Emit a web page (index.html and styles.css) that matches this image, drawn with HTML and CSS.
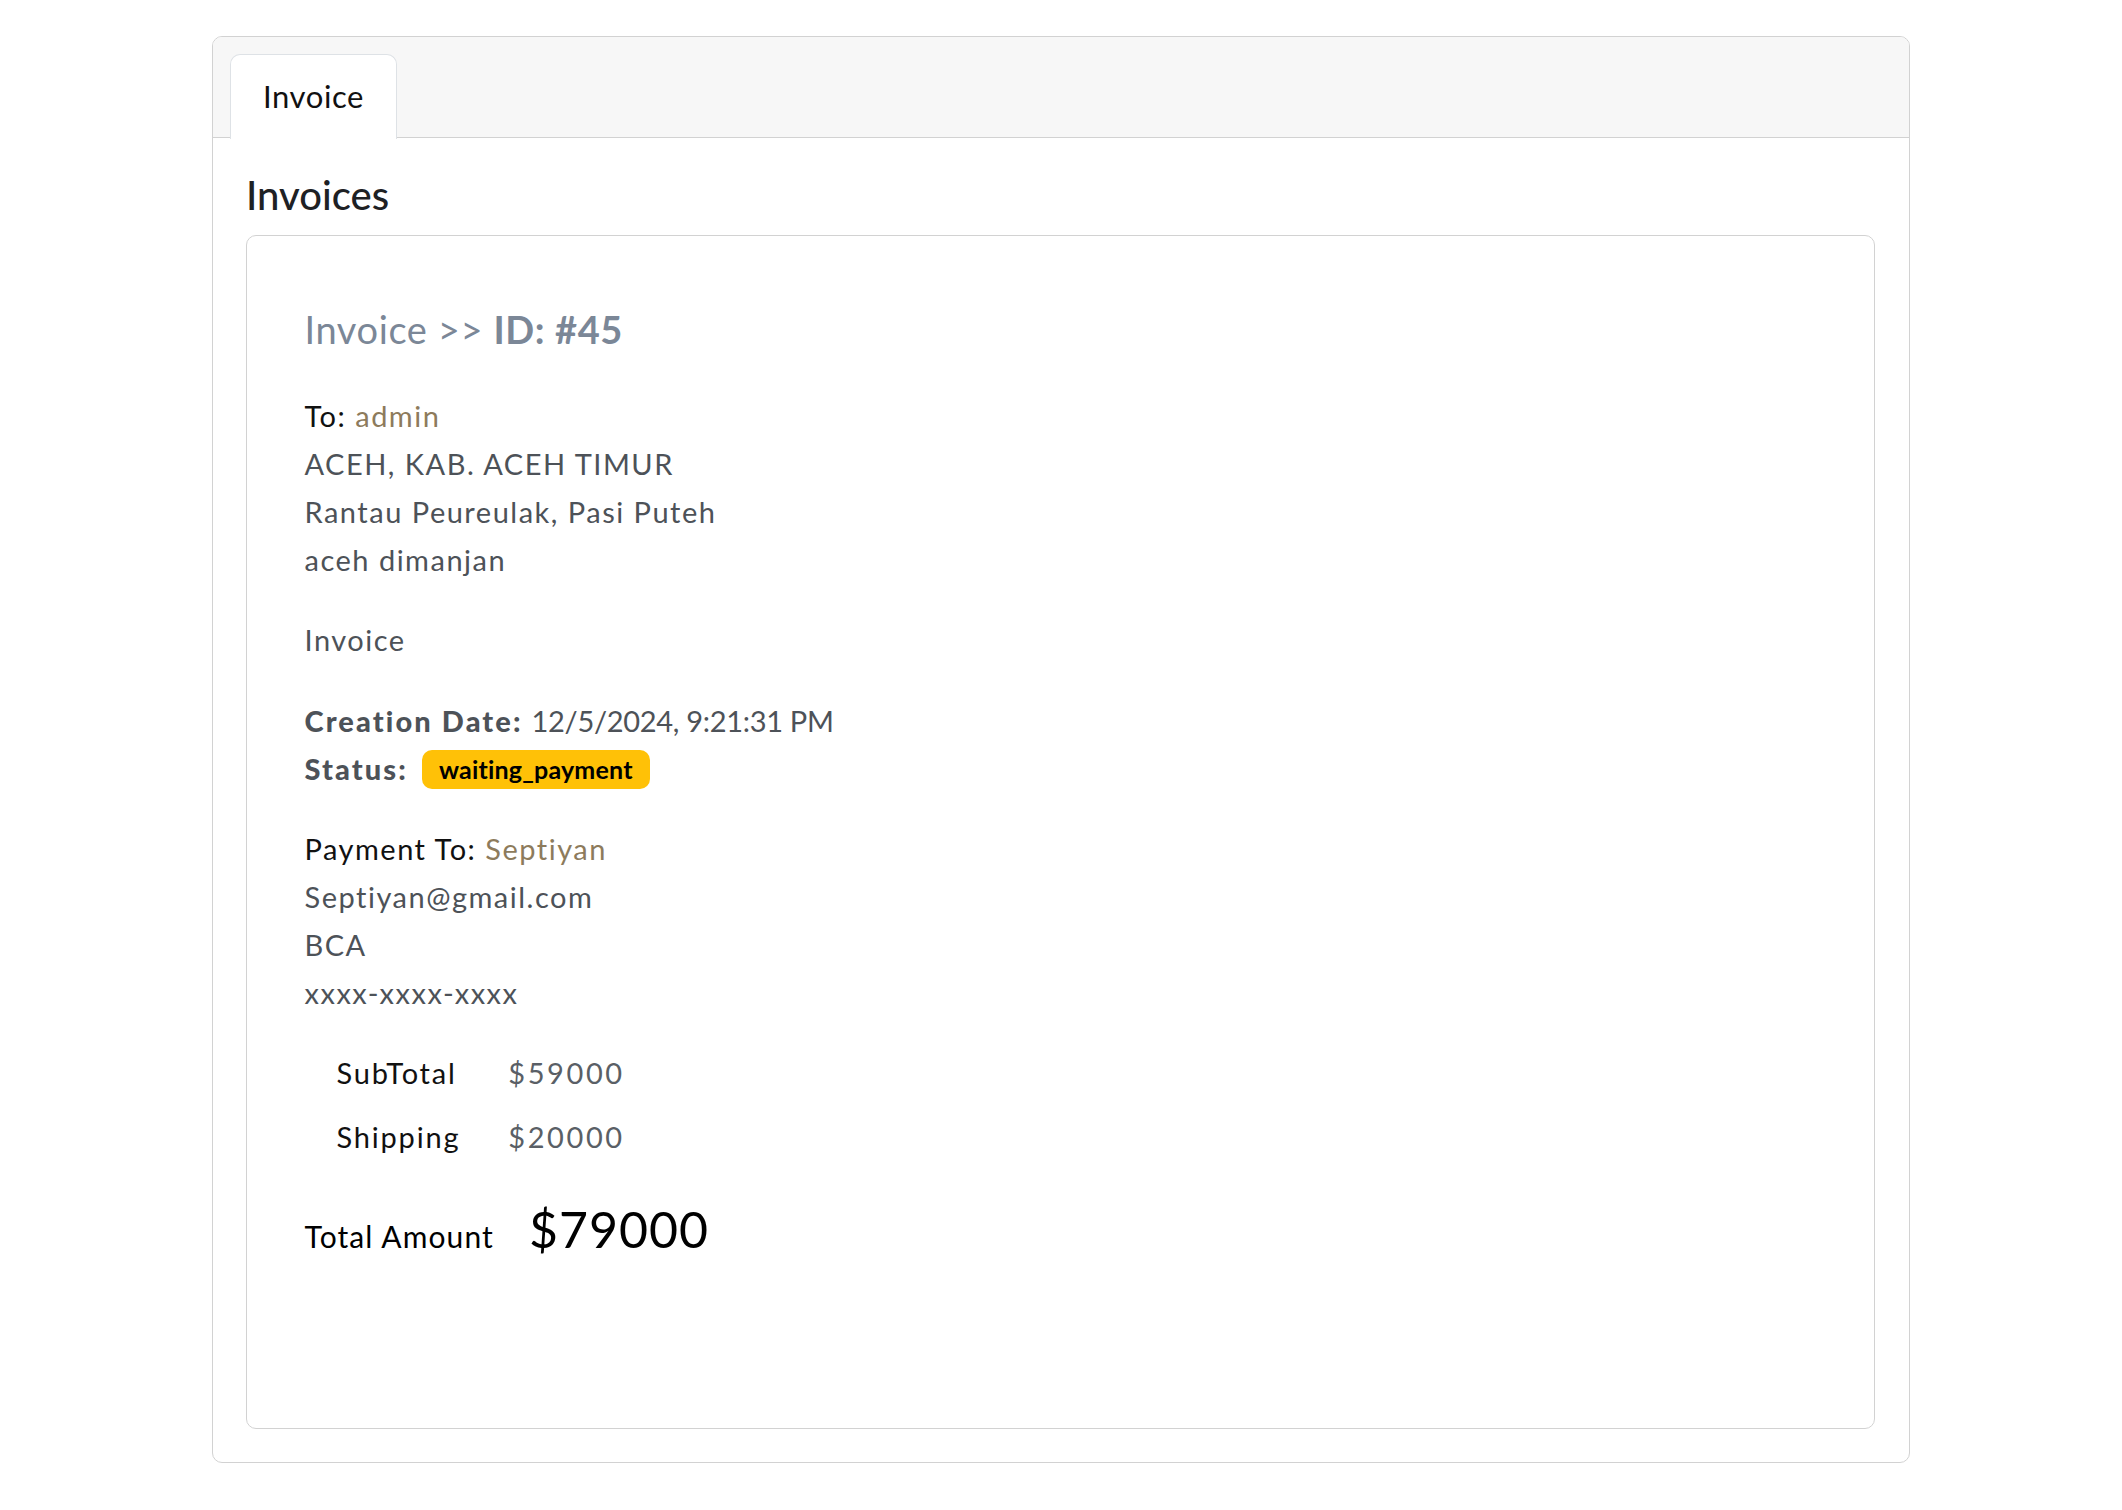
FILE: index.html
```html
<!DOCTYPE html>
<html lang="en">
<head>
<meta charset="utf-8">
<title>Invoices</title>
<link rel="stylesheet" href="styles.css">
</head>
<body>
<div class="card">
  <div class="card-header">
    <div class="tab">Invoice</div>
  </div>
  <div class="card-body">
    <h2 class="heading">Invoices</h2>
    <div class="invoice">
      <h3 class="inv-title">Invoice &gt;&gt; <b>ID: #45</b></h3>
      <div class="addr">
        <div class="line"><span class="label">To:</span> <span class="accent">admin</span></div>
        <div class="line">ACEH, KAB. ACEH TIMUR</div>
        <div class="line">Rantau Peureulak, Pasi Puteh</div>
        <div class="line">aceh dimanjan</div>
      </div>
      <div class="kind">Invoice</div>
      <div class="meta">
        <div class="line"><b>Creation Date:</b> <span class="date">12/5/2024, 9:21:31 PM</span></div>
        <div class="line status-line"><b>Status:</b> <span class="badge">waiting_payment</span></div>
      </div>
      <div class="pay">
        <div class="line"><span class="label">Payment To:</span> <span class="accent">Septiyan</span></div>
        <div class="line">Septiyan@gmail.com</div>
        <div class="line">BCA</div>
        <div class="line">xxxx-xxxx-xxxx</div>
      </div>
      <table class="sums">
        <tr><th>SubTotal</th><td>$59000</td></tr>
        <tr><th>Shipping</th><td>$20000</td></tr>
      </table>
      <div class="total">
        <span class="total-label">Total Amount</span>
        <span class="total-value">$79000</span>
      </div>
    </div>
  </div>
</div>
</body>
</html>
```

FILE: styles.css
```css
* { box-sizing: border-box; }
html, body { margin: 0; padding: 0; background: #fff; }
body {
  font-family: "Lato", "Noto Sans", sans-serif;
  color: #4d5258;
}
.card {
  margin: 36px 0 0 212px;
  width: 1698px;
  border: 1.5px solid #d2d2d2;
  border-radius: 10px;
  overflow: hidden;
}
.card-header {
  background: #f7f7f7;
  border-bottom: 1.5px solid #d2d2d2;
  padding: 17px 0 0 17px;
  display: flex;
  height: 101px;
}
.tab {
  background: #fff;
  border: 1.5px solid #dee2e6;
  border-bottom: none;
  border-radius: 10px 10px 0 0;
  width: 167px;
  height: 85px;
  margin-bottom: -2px;
  display: flex;
  align-items: center;
  justify-content: center;
  font-size: 31px;
  letter-spacing: 0.6px;
  color: #111;
  padding-bottom: 2px;
}
.card-body {
  padding: 29px 34px 33px 33px;
}
.heading {
  margin: 0 0 12px 0;
  font-size: 40px;
  font-weight: 500;
  color: #1e2124;
  line-height: 56px;
}
.invoice {
  border: 1.5px solid #d2d2d2;
  border-radius: 10px;
  min-height: 1194px;
  padding: 67px 47px 40px 57.5px;
}
.inv-title {
  margin: 0 0 37px 0;
  font-size: 38px;
  font-weight: 400;
  letter-spacing: 0.6px;
  color: #7b8797;
  line-height: 52px;
}
.inv-title b { font-weight: 700; }
.line {
  font-size: 29px;
  line-height: 48px;
  letter-spacing: 1.5px;
}
.label { color: #111; }
.accent { color: #8d7b5c; }
.addr { margin-bottom: 32px; }
.kind { font-size: 29px; line-height: 48px; letter-spacing: 1.5px; margin-bottom: 33px; }
.meta { margin-bottom: 32px; }
.meta b { font-weight: 900; letter-spacing: 2.1px; }
.date { letter-spacing: -0.3px; }
.status-line { display: flex; align-items: center; gap: 14px; }
.badge {
  display: inline-block;
  background: #ffc107;
  color: #000;
  font-weight: 700;
  font-size: 25px;
  letter-spacing: 0.2px;
  line-height: 39px;
  height: 39px;
  padding: 0 17px;
  border-radius: 10px;
}
.pay { margin-bottom: 24px; }
.sums {
  border-collapse: collapse;
  margin-left: 16px;
}
.sums th {
  text-align: left;
  font-weight: 400;
  color: #111;
  font-size: 29px;
  letter-spacing: 1.8px;
  padding: 8px 48px 8px 16px;
  line-height: 48px;
  height: 64px;
}
.sums td {
  font-size: 29px;
  letter-spacing: 2.6px;
  color: #5a5f66;
  padding: 8px 0;
  line-height: 48px;
}
.total {
  display: flex;
  align-items: baseline;
  gap: 35px;
  margin-top: 30px;
  color: #000;
}
.total-label { font-size: 30px; letter-spacing: 1.1px; }
.total-value { font-size: 50px; letter-spacing: 1px; }
```
